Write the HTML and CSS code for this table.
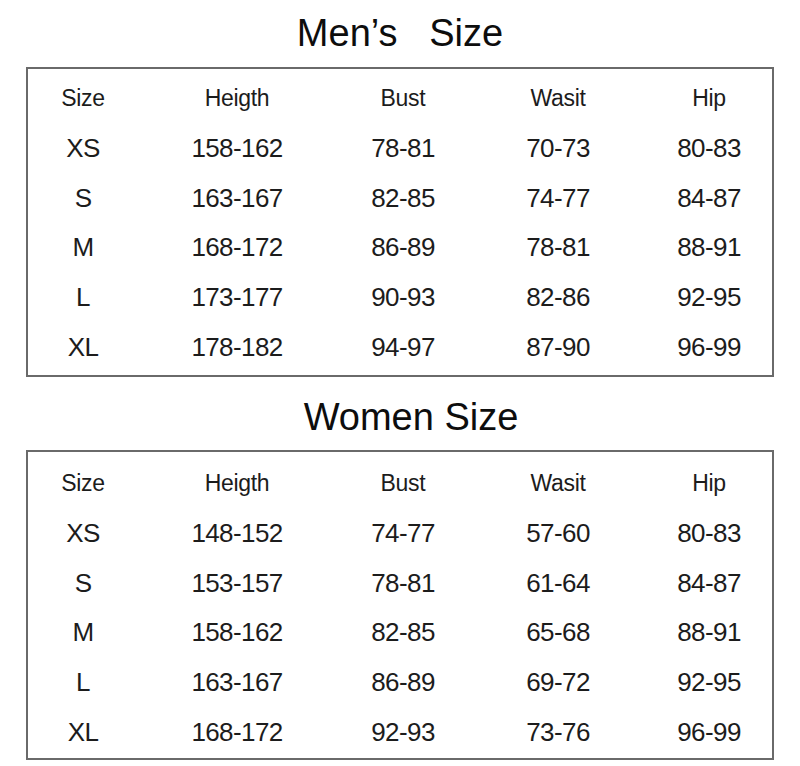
FILE: index.html
```html
<!DOCTYPE html>
<html>
<head>
<meta charset="utf-8">
<link rel="stylesheet" href="styles.css">
</head>
<body>
<div class="page">
  <h1 class="title title-men">Men’s   Size</h1>
  <div class="table">
    <div class="row head"><span>Size</span><span>Heigth</span><span>Bust</span><span>Wasit</span><span>Hip</span></div>
    <div class="row"><span>XS</span><span>158-162</span><span>78-81</span><span>70-73</span><span>80-83</span></div>
    <div class="row"><span>S</span><span>163-167</span><span>82-85</span><span>74-77</span><span>84-87</span></div>
    <div class="row"><span>M</span><span>168-172</span><span>86-89</span><span>78-81</span><span>88-91</span></div>
    <div class="row"><span>L</span><span>173-177</span><span>90-93</span><span>82-86</span><span>92-95</span></div>
    <div class="row"><span>XL</span><span>178-182</span><span>94-97</span><span>87-90</span><span>96-99</span></div>
  </div>
  <h1 class="title title-women">Women Size</h1>
  <div class="table table-women">
    <div class="row head"><span>Size</span><span>Heigth</span><span>Bust</span><span>Wasit</span><span>Hip</span></div>
    <div class="row"><span>XS</span><span>148-152</span><span>74-77</span><span>57-60</span><span>80-83</span></div>
    <div class="row"><span>S</span><span>153-157</span><span>78-81</span><span>61-64</span><span>84-87</span></div>
    <div class="row"><span>M</span><span>158-162</span><span>82-85</span><span>65-68</span><span>88-91</span></div>
    <div class="row"><span>L</span><span>163-167</span><span>86-89</span><span>69-72</span><span>92-95</span></div>
    <div class="row"><span>XL</span><span>168-172</span><span>92-93</span><span>73-76</span><span>96-99</span></div>
  </div>
</div>
</body>
</html>
```
FILE: styles.css
```css
html, body {
  margin: 0;
  padding: 0;
  background: #fff;
}
body {
  font-family: "Liberation Sans", Arial, sans-serif;
  color: #1c1c1c;
}
.page {
  width: 800px;
  height: 766px;
  display: flex;
  flex-direction: column;
  align-items: center;
}
.title {
  margin: 0;
  font-weight: normal;
  font-size: 38px;
  white-space: pre;
  text-align: center;
  color: #0d0d0d;
}
.title-men {
  height: 67px;
  line-height: 67px;
}
.title-women {
  height: 73px;
  line-height: 73px;
  padding-top: 4px;
  box-sizing: border-box;
  padding-left: 22px;
}
.table {
  width: 748px;
  height: 310px;
  box-sizing: border-box;
  border: 2px solid #6a6a6a;
  padding: 5px 0 3px;
  display: flex;
  flex-direction: column;
}
.table-women {
  padding: 7px 0 1px;
}
.row {
  height: 50px;
  display: grid;
  grid-template-columns: 110px 198px 134px 176px 126px;
  align-items: center;
  font-size: 26px;
  letter-spacing: -0.6px;
}
.row span {
  text-align: center;
}
.row.head {
  font-size: 23px;
  letter-spacing: -0.3px;
}
```
